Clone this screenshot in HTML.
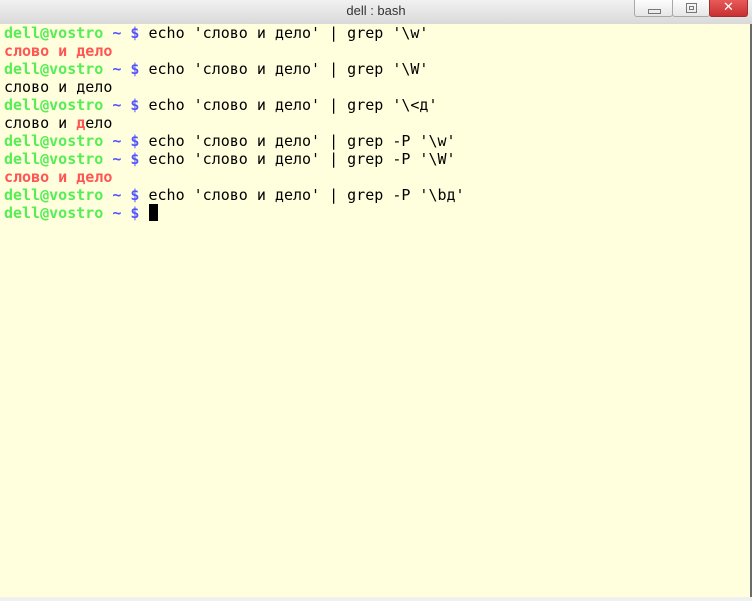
<!DOCTYPE html>
<html><head><meta charset="utf-8"><style>
html,body{margin:0;padding:0;width:752px;height:601px;overflow:hidden;background:#f0f0f0}
.title{position:absolute;left:0;top:0;width:752px;height:24px;background:linear-gradient(#f2f2f2,#d9d9d9);font:13px "Liberation Sans","DejaVu Sans",sans-serif;color:#333;text-align:center;line-height:22px}
.btn{position:absolute;top:0;height:17px;border:1px solid #a8a8a8;border-top:none;border-radius:0 0 3px 3px;background:linear-gradient(#fdfdfd,#e6e6e6);box-sizing:border-box}
.term{position:absolute;left:0;top:24px;width:750px;height:573px;background:#ffffdd;border-right:2px solid #6b6b6b}
pre{margin:0;padding:0 0 0 4px;font:15px/18px "DejaVu Sans Mono","Liberation Mono",monospace;color:#000}
.g{color:#55ee55;font-weight:bold}.b{color:#5555ff;font-weight:bold}.r{color:#ff5555;font-weight:bold}
.cur{display:inline-block;width:9px;height:17px;background:#000;vertical-align:-3px}
</style></head><body>
<div class="title">dell : bash</div>
<div class="btn" style="left:634px;width:39px"><div style="position:absolute;left:13px;top:9px;width:11px;height:3px;border:1px solid #777"></div></div>
<div class="btn" style="left:672px;width:38px"><div style="position:absolute;left:13px;top:3px;width:9px;height:8px;border:1px solid #777"><div style="position:absolute;left:2px;top:2px;width:3px;height:2px;border:1px solid #777"></div></div></div>
<div class="btn" style="left:709px;width:39px;background:linear-gradient(#e85a5a,#c83030);border-color:#a03030;color:#fff;font:bold 13px 'DejaVu Sans',sans-serif;text-align:center;line-height:15px">✕</div>
<div class="term"><pre><span class="g">dell@vostro</span> <span class="b">~ $</span> echo 'слово и дело' | grep '\w'
<span class="r">слово и дело</span>
<span class="g">dell@vostro</span> <span class="b">~ $</span> echo 'слово и дело' | grep '\W'
слово и дело
<span class="g">dell@vostro</span> <span class="b">~ $</span> echo 'слово и дело' | grep '\&lt;д'
слово и <span class="r">д</span>ело
<span class="g">dell@vostro</span> <span class="b">~ $</span> echo 'слово и дело' | grep -P '\w'
<span class="g">dell@vostro</span> <span class="b">~ $</span> echo 'слово и дело' | grep -P '\W'
<span class="r">слово и дело</span>
<span class="g">dell@vostro</span> <span class="b">~ $</span> echo 'слово и дело' | grep -P '\bд'
<span class="g">dell@vostro</span> <span class="b">~ $</span> <span class="cur"></span></pre></div>
</body></html>
